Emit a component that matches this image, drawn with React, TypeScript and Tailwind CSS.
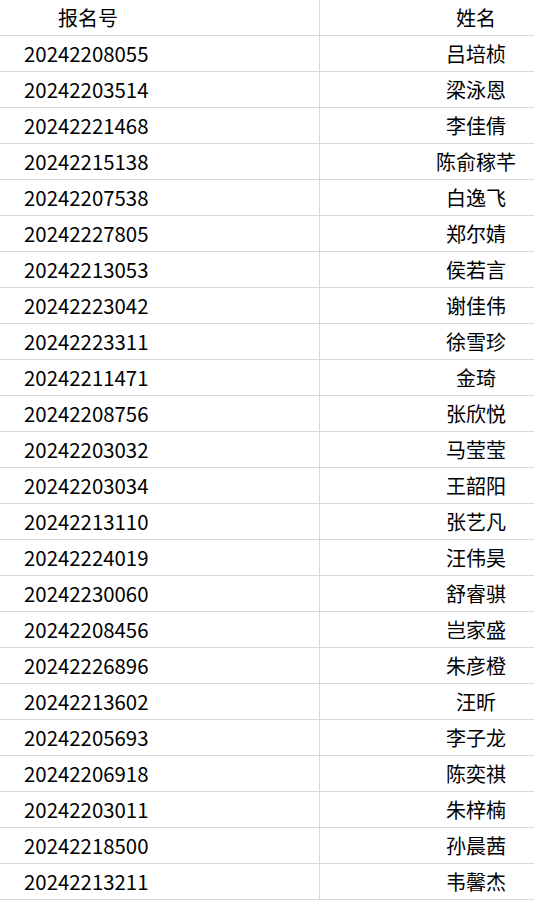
const rows: [string, string][] = [
  ["20242208055", "吕培桢"],
  ["20242203514", "梁泳恩"],
  ["20242221468", "李佳倩"],
  ["20242215138", "陈俞稼芊"],
  ["20242207538", "白逸飞"],
  ["20242227805", "郑尔婧"],
  ["20242213053", "侯若言"],
  ["20242223042", "谢佳伟"],
  ["20242223311", "徐雪珍"],
  ["20242211471", "金琦"],
  ["20242208756", "张欣悦"],
  ["20242203032", "马莹莹"],
  ["20242203034", "王韶阳"],
  ["20242213110", "张艺凡"],
  ["20242224019", "汪伟昊"],
  ["20242230060", "舒睿骐"],
  ["20242208456", "岂家盛"],
  ["20242226896", "朱彦橙"],
  ["20242213602", "汪昕"],
  ["20242205693", "李子龙"],
  ["20242206918", "陈奕祺"],
  ["20242203011", "朱梓楠"],
  ["20242218500", "孙晨茜"],
  ["20242213211", "韦馨杰"],
];

const font = { fontFamily: '"Noto Sans CJK SC", "Noto Sans", sans-serif' };

export default function App() {
  return (
    <div className="w-[534px] h-[900px] overflow-hidden bg-white text-black" style={font}>
      <div className="w-[632px] flex flex-col text-[20px] leading-none">
        {/* header */}
        <div className="flex h-[36px] border-b border-[#d9d9d9]">
          <div className="w-[320px] border-r border-[#d9d9d9] flex items-center pl-[58px]">报名号</div>
          <div className="flex-1 flex items-center justify-center">姓名</div>
        </div>
        {rows.map(([id, name]) => (
          <div key={id} className="flex h-[36px] border-b border-[#d9d9d9]">
            <div className="w-[320px] border-r border-[#d9d9d9] flex items-center pl-[24px] text-[20.4px]">{id}</div>
            <div className="flex-1 flex items-center justify-center">{name}</div>
          </div>
        ))}
      </div>
    </div>
  );
}
